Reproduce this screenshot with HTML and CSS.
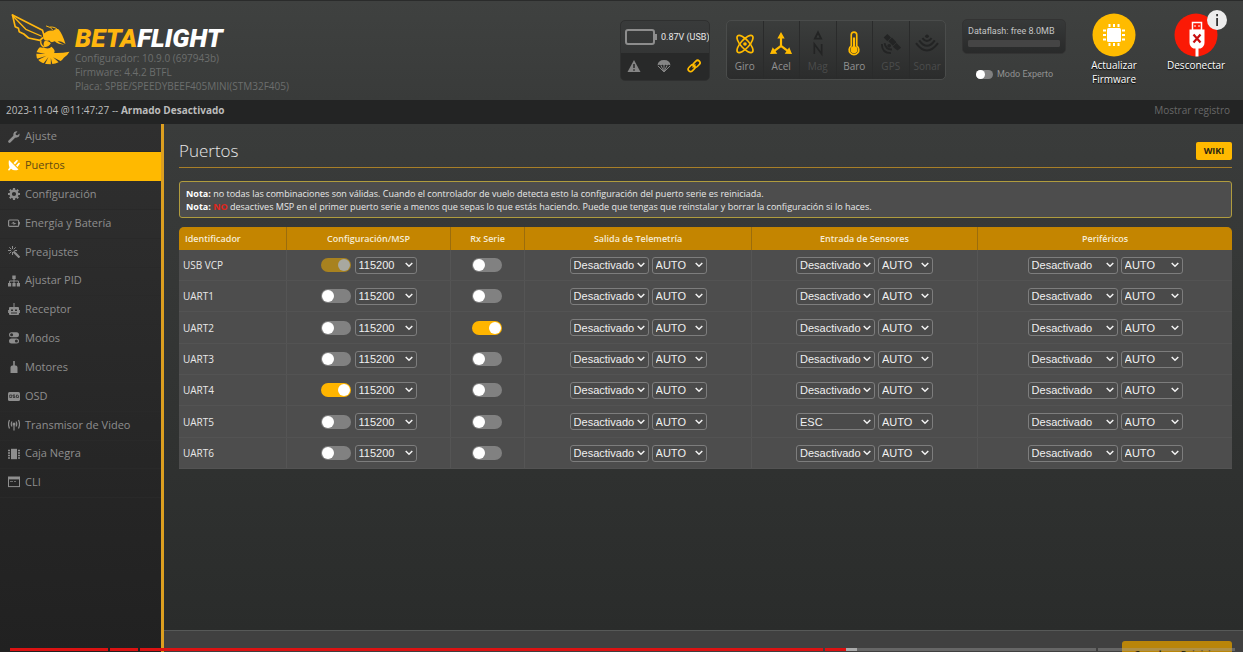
FILE: index.html
```html
<!DOCTYPE html>
<html lang="es">
<head>
<meta charset="utf-8">
<title>Betaflight Configurator - Puertos</title>
<link rel="stylesheet" href="styles.css">
</head>
<body>
<header class="topbar">
  <div class="brand">
    <svg class="bee" viewBox="30 35 180 156" aria-hidden="true">
      <g fill="none" stroke="#ffb70f" stroke-width="5" stroke-linejoin="round" stroke-linecap="round">
        <path d="M36 41 L126 87 L131 104"/>
        <path d="M36 41 L44 76 L54 81 L56 91 L70 98 L84 110 L118 117 L126 110"/>
        <path d="M38 45 L76 84 L122 104" stroke-width="4"/>
        <path d="M121 119 Q119 130 130 137" stroke-width="4"/>
        <path d="M138 74 Q150 76 158 87 M150 77 Q166 76 174 88" stroke-width="3"/>
      </g>
      <g fill="#ffb70f">
        <path d="M128 99 Q142 84 158 88 Q164 80 174 84 Q186 98 195 128 Q184 119 171 119 Q178 127 192 130 Q172 130 163 120 Q150 126 146 117 Q134 122 128 111 Z"/>
        <path d="M133 118 Q146 118 151 126 Q146 136 132 138 Q126 128 133 118 Z"/>
        <path d="M133 140 Q146 144 153 136 Q166 146 161 155 Q184 156 207 151 Q200 164 190 169 Q181 185 151 189 Q120 189 109 170 Q104 149 118 138 Z"/>
      </g>
      <g fill="#3a3c3b">
        <path d="M107 152 L134 158 L107 157Z M108 173 L138 163 L111 177Z M127 189 L144 167 L133 189Z M151 190 L151 170 L156 190Z M176 184 L158 168 L181 180Z"/>
      </g>
    </svg>
    <div class="brand-text">
      <div class="wordmark"><span class="beta">BETA</span>FLIGHT</div>
      <div class="version">Configurador: 10.9.0 (697943b)</div>
      <div class="version">Firmware: 4.4.2 BTFL</div>
      <div class="version">Placa: SPBE/SPEEDYBEEF405MINI(STM32F405)</div>
    </div>
  </div>

  <div class="battery-panel">
    <div class="battery-row">
      <svg width="32" height="16" viewBox="0 0 32 16" aria-hidden="true"><rect x="1" y="1" width="28" height="14" rx="2" fill="none" stroke="#8d8d8d" stroke-width="2"/><rect x="30" y="5" width="2" height="6" fill="#8d8d8d"/></svg>
      <span>0.87V (USB)</span>
    </div>
    <div class="status-icons">
      <svg width="14" height="14" viewBox="0 0 14 14" aria-hidden="true"><path d="M7 1 L13.5 13 H.5 Z" fill="#858585"/><path d="M7 5v4M7 10.2v1.6" stroke="#292929" stroke-width="1.5"/></svg>
      <svg width="14" height="14" viewBox="0 0 14 14" aria-hidden="true"><path d="M.5 6.5 Q1 1 7 1 T13.5 6.5 Q11.500 5 10 6.500 Q8.500 5 7 6.500 Q5.500 5 4 6.500 Q2.500 5 .5 6.500Z" fill="#858585"/><path d="M1 7 L7 13 L13 7 M4 6.500 L7 13 L10 6.500 M7 6v7" stroke="#858585" fill="none"/></svg>
      <svg width="14" height="14" viewBox="0 0 14 14" aria-hidden="true"><g fill="none" stroke="#ffbb00" stroke-width="1.700"><rect x="5.800" y="2.400" width="7.600" height="4.800" rx="2.400" transform="rotate(-45 9.600 4.800)"/><rect x=".8" y="6.800" width="7.600" height="4.800" rx="2.400" transform="rotate(-45 4.600 9.200)"/><path d="M5.500 8.500 L8.500 5.500" stroke-width="1.200"/></g></svg>
    </div>
  </div>

  <ul class="sensors">
    <li class="on"><svg viewBox="0 0 24 24" aria-hidden="true"><g fill="none" stroke="#ffbb00" stroke-width="1.800"><ellipse cx="12" cy="12" rx="12" ry="4.600" transform="rotate(48 12 12)"/><ellipse cx="12" cy="12" rx="12" ry="4.600" transform="rotate(-48 12 12)"/></g><circle cx="12" cy="12" r="2" fill="#ffbb00"/></svg>Giro</li>
    <li class="on"><svg viewBox="0 0 24 24" aria-hidden="true"><path d="M12 3 V14 L4 20 M12 14 L20 20" fill="none" stroke="#ffbb00" stroke-width="2.400"/><path d="M12 -1 L16 6 H8Z M0 23 L3 15.500 L8 22.500Z M24 23 L21 15.500 L16 22.500Z" fill="#ffbb00"/></svg>Acel</li>
    <li><svg viewBox="0 0 24 24" aria-hidden="true"><path d="M12 -3 L17 7 H7Z M12 1.500 L10.300 5.200 H13.700Z" fill="#232424" fill-rule="evenodd"/><path d="M8 23 V12 L16 23 V12" fill="none" stroke="#232424" stroke-width="1.800"/></svg>Mag</li>
    <li class="on"><svg viewBox="0 0 24 24" aria-hidden="true"><path d="M9 14 V2 Q9 -1 12 -1 T15 2 V14 A5.300 5.300 0 1 1 9 14Z" fill="none" stroke="#ffbb00" stroke-width="1.800"/><circle cx="12" cy="18.200" r="3.800" fill="#ffbb00"/><path d="M12 17V5" stroke="#ffbb00" stroke-width="2.400"/></svg>Baro</li>
    <li><svg viewBox="0 0 24 24" aria-hidden="true"><path d="M4 5 L8 1 L12 5 L8 9Z M14 15 L18 11 L23 16 L19 19Z M9 9 L13 5 L18 10 L14 14Z" fill="#232424"/><path d="M2 12 Q2 22 12 22 M5 11 Q6 18 13 18" fill="none" stroke="#232424" stroke-width="2"/><circle cx="10" cy="14" r="2" fill="#232424"/></svg>GPS</li>
    <li><svg viewBox="0 0 24 24" aria-hidden="true"><g fill="none" stroke="#232424" stroke-width="2.200"><path d="M0 11 Q12 27 24 11 M3.500 8 Q12 20 20.500 8 M7 5.500 Q12 12 17 5.500"/></g><circle cx="12" cy="3.500" r="2" fill="#232424"/></svg>Sonar</li>
  </ul>

  <div class="flash-col">
    <div class="dataflash"><label for="flash">Dataflash: free 8.0MB</label><progress id="flash" value="0" max="8"></progress></div>
    <label class="expert"><input class="toggle small" type="checkbox">Modo Experto</label>
  </div>

  <button class="round-action" type="button">
    <svg viewBox="0 0 46 46" aria-hidden="true"><circle cx="23" cy="23" r="21.500" fill="#ffbb00"/><rect x="16" y="16" width="14" height="14" rx="1.500" fill="#fff"/><path d="M18.500 12v3M23 12v3M27.500 12v3M18.500 31v3M23 31v3M27.500 31v3M12 18.500h3M12 23h3M12 27.500h3M31 18.500h3M31 23h3M31 27.500h3" stroke="#fff" stroke-width="2"/></svg>
    Actualizar<br>Firmware
  </button>
  <button class="round-action" type="button">
    <svg viewBox="0 0 46 46" aria-hidden="true"><circle cx="23" cy="23" r="21.500" fill="#fb1a05"/><rect x="19.500" y="10.500" width="9" height="8" fill="#fb1a05" stroke="#fff" stroke-width="1.500"/><path d="M22 13v2M26 13v2" stroke="#fff"/><path d="M16.500 17.500h15v13q0 4-4 6h-2v8h-3v-8h-2q-4-2-4-6z" fill="#fff"/><path d="M20.500 22.500l7 8M27.500 22.500l-7 8" stroke="#c80f10" stroke-width="2.200"/></svg>
    Desconectar
  </button>
  <button class="info" type="button" aria-label="Información"><svg viewBox="0 0 20 20" aria-hidden="true"><circle cx="10" cy="10" r="10" fill="#ededed"/><path d="M9.200 4h1.800v2.200H9.200zM9.200 8h1.800v8H9.200z" fill="#333"/></svg></button>
</header>

<div class="logbar">
  <span>2023-11-04 @11:47:27 -- <b>Armado Desactivado</b></span>
  <a class="showlog" href="#">Mostrar registro</a>
</div>

<div class="body">
  <nav class="sidebar">
    <a href="#"><svg viewBox="0 0 12 12" aria-hidden="true"><path d="M1.500 10.500 L7 5" stroke="currentColor" stroke-width="2.600" stroke-linecap="round"/><path d="M11.500 2.500 L9.500 4.300 L7.800 4 L7.600 2.400 L9.500.5 Q6 -.3 5.300 3 Q5.200 6 8 6.700 Q12 6.500 11.500 2.500Z" fill="currentColor"/></svg>Ajuste</a>
    <a class="active" href="#" aria-current="page"><svg viewBox="0 0 12 12" aria-hidden="true"><path d="M1 1 L10.500 10.500 Q6 12.500 3 9.800 L1 11.800 L0 10.800 L1.500 8.500 Q.2 5 1 1Z M5.500 4 L9 .8 L10 1.800 L7 5.500Z M8 6.500 L11 3.500 L12 4.500 L9.500 8Z" fill="currentColor"/></svg>Puertos</a>
    <a href="#"><svg viewBox="0 0 12 12" aria-hidden="true"><circle cx="6" cy="6" r="3.300" fill="none" stroke="currentColor" stroke-width="2.400"/><path d="M6 0v2M6 10v2M0 6h2M10 6h2M1.800 1.800l1.400 1.400M8.800 8.800l1.400 1.400M10.200 1.800L8.800 3.200M3.200 8.800l-1.400 1.400" stroke="currentColor" stroke-width="2.200"/></svg>Configuración</a>
    <a href="#"><svg viewBox="0 0 12 12" aria-hidden="true"><rect x=".6" y="3" width="10" height="6.400" rx="1" fill="none" stroke="currentColor" stroke-width="1.200"/><path d="M11 5h1v2.400h-1zM3 6.500 L6.200 4.500 V6 H8.500 L5.500 8 V6.500Z" fill="currentColor"/></svg>Energía y Batería</a>
    <a href="#"><svg viewBox="0 0 12 12" aria-hidden="true"><path d="M5.500 5.500 L11.500 11.500" stroke="currentColor" stroke-width="2.200"/><path d="M4.500 0v3M4.500 6v3M0 4.500h3M1.300 1.300l2 2M7.700 1.300l-2 2M1.300 7.700l2-2M6.500 4.500h2.500" stroke="currentColor"/></svg>Preajustes</a>
    <a href="#"><svg viewBox="0 0 12 12" aria-hidden="true"><path d="M4.300.5h3.400v3.400H4.300zM0 8h3.200v3.500H0zM4.400 8h3.200v3.500H4.400zM8.800 8H12v3.500H8.800z" fill="currentColor"/><path d="M6 3v6M1.600 9V6h8.800v3" fill="none" stroke="currentColor"/></svg>Ajustar PID</a>
    <a href="#"><svg viewBox="0 0 12 12" aria-hidden="true"><path d="M2 4h8q1 0 1 1v6q0 1-1 1H2q-1 0-1-1V5q0-1 1-1z" fill="currentColor"/><path d="M6 0v4M.4 7v3M11.600 7v3" stroke="currentColor"/><path d="M3 6.500h2v1.500H3zM7 6.500h2v1.500H7zM3 9.500h6v1H3z" fill="#2e2e2e"/></svg>Receptor</a>
    <a href="#"><svg viewBox="0 0 12 12" aria-hidden="true"><rect x="1" y=".3" width="10" height="5" rx="2.500" fill="currentColor"/><rect x="1" y="6.500" width="10" height="5" rx="2.500" fill="currentColor"/><circle cx="3.600" cy="2.800" r="1.500" fill="#2e2e2e"/><circle cx="8.400" cy="9" r="1.500" fill="#2e2e2e"/></svg>Modos</a>
    <a href="#"><svg viewBox="0 0 12 12" aria-hidden="true"><path d="M5.200 0h1.600v4.500H8q1.500.5 1.500 2V12h-7V6.500q0-1.500 1.500-2h1.200z" fill="currentColor"/></svg>Motores</a>
    <a href="#"><svg viewBox="0 0 12 12" aria-hidden="true"><rect y="2" width="12" height="9" rx="1.500" fill="currentColor"/><path d="M1.700 5h2v2.500h-2zM7 5H5v1.200h2v1.300H5M8.500 5h1.200l.8 1v1.500h-2z" fill="none" stroke="#2e2e2e" stroke-width=".8"/></svg>OSD</a>
    <a href="#"><svg viewBox="0 0 12 12" aria-hidden="true"><circle cx="6" cy="5" r="1.500" fill="currentColor"/><path d="M6 5v6.500M4 2.500q-1.500 2.500 0 5M8 2.500q1.500 2.500 0 5M1.500 1q-2 4 0 8.500M10.500 1q2 4 0 8.500" fill="none" stroke="currentColor" stroke-width="1.200"/></svg>Transmisor de Video</a>
    <a href="#"><svg viewBox="0 0 12 12" aria-hidden="true"><rect x="3" y=".8" width="6" height="10.400" fill="currentColor"/><path d="M0 2.500h2M0 5h2M0 7.500h2M0 10h2M10 2.500h2M10 5h2M10 7.500h2M10 10h2" stroke="currentColor" stroke-width="1.300"/></svg>Caja Negra</a>
    <a href="#"><svg viewBox="0 0 12 12" aria-hidden="true"><rect x=".5" y="1" width="11" height="9.600" fill="none" stroke="currentColor"/><path d="M0 1h12v2.400H0z" fill="currentColor"/><path d="M2 5.500h3M6 5.500h2" stroke="currentColor" stroke-width=".7"/></svg>CLI</a>
  </nav>

  <div class="main">
    <main class="content">
      <div class="title-row"><h1>Puertos</h1><a class="wiki" href="#">WIKI</a></div>
      <div class="note">
        <p><b>Nota:</b> no todas las combinaciones son válidas. Cuando el controlador de vuelo detecta esto la configuración del puerto serie es reiniciada.</p>
        <p><b>Nota:</b> <b class="no">NO</b> desactives MSP en el primer puerto serie a menos que sepas lo que estás haciendo. Puede que tengas que reinstalar y borrar la configuración si lo haces.</p>
      </div>
      <table class="ports">
        <colgroup><col class="c-id"><col class="c-msp"><col class="c-rx"><col class="c-wide"><col class="c-wide"><col></colgroup>
        <thead><tr><th>Identificador</th><th>Configuración/MSP</th><th>Rx Serie</th><th>Salida de Telemetría</th><th>Entrada de Sensores</th><th>Periféricos</th></tr></thead>
        <tbody>
          <tr><td>USB VCP</td>
            <td><div class="cell"><input class="toggle" type="checkbox" checked disabled aria-label="MSP USB VCP"><select class="rate" aria-label="Velocidad MSP"><option>115200</option></select></div></td>
            <td><div class="cell"><input class="toggle" type="checkbox" aria-label="Rx Serie USB VCP"></div></td>
            <td><div class="cell"><select class="func" aria-label="Telemetría"><option>Desactivado</option></select><select class="auto" aria-label="Velocidad telemetría"><option>AUTO</option></select></div></td>
            <td><div class="cell"><select class="func" aria-label="Sensor"><option>Desactivado</option></select><select class="auto" aria-label="Velocidad sensor"><option>AUTO</option></select></div></td>
            <td><div class="cell"><select class="func wide" aria-label="Periférico"><option>Desactivado</option></select><select class="rate" aria-label="Velocidad periférico"><option>AUTO</option></select></div></td></tr>
          <tr><td>UART1</td>
            <td><div class="cell"><input class="toggle" type="checkbox" aria-label="MSP UART1"><select class="rate" aria-label="Velocidad MSP"><option>115200</option></select></div></td>
            <td><div class="cell"><input class="toggle" type="checkbox" aria-label="Rx Serie UART1"></div></td>
            <td><div class="cell"><select class="func" aria-label="Telemetría"><option>Desactivado</option></select><select class="auto" aria-label="Velocidad telemetría"><option>AUTO</option></select></div></td>
            <td><div class="cell"><select class="func" aria-label="Sensor"><option>Desactivado</option></select><select class="auto" aria-label="Velocidad sensor"><option>AUTO</option></select></div></td>
            <td><div class="cell"><select class="func wide" aria-label="Periférico"><option>Desactivado</option></select><select class="rate" aria-label="Velocidad periférico"><option>AUTO</option></select></div></td></tr>
          <tr><td>UART2</td>
            <td><div class="cell"><input class="toggle" type="checkbox" aria-label="MSP UART2"><select class="rate" aria-label="Velocidad MSP"><option>115200</option></select></div></td>
            <td><div class="cell"><input class="toggle" type="checkbox" checked aria-label="Rx Serie UART2"></div></td>
            <td><div class="cell"><select class="func" aria-label="Telemetría"><option>Desactivado</option></select><select class="auto" aria-label="Velocidad telemetría"><option>AUTO</option></select></div></td>
            <td><div class="cell"><select class="func" aria-label="Sensor"><option>Desactivado</option></select><select class="auto" aria-label="Velocidad sensor"><option>AUTO</option></select></div></td>
            <td><div class="cell"><select class="func wide" aria-label="Periférico"><option>Desactivado</option></select><select class="rate" aria-label="Velocidad periférico"><option>AUTO</option></select></div></td></tr>
          <tr><td>UART3</td>
            <td><div class="cell"><input class="toggle" type="checkbox" aria-label="MSP UART3"><select class="rate" aria-label="Velocidad MSP"><option>115200</option></select></div></td>
            <td><div class="cell"><input class="toggle" type="checkbox" aria-label="Rx Serie UART3"></div></td>
            <td><div class="cell"><select class="func" aria-label="Telemetría"><option>Desactivado</option></select><select class="auto" aria-label="Velocidad telemetría"><option>AUTO</option></select></div></td>
            <td><div class="cell"><select class="func" aria-label="Sensor"><option>Desactivado</option></select><select class="auto" aria-label="Velocidad sensor"><option>AUTO</option></select></div></td>
            <td><div class="cell"><select class="func wide" aria-label="Periférico"><option>Desactivado</option></select><select class="rate" aria-label="Velocidad periférico"><option>AUTO</option></select></div></td></tr>
          <tr><td>UART4</td>
            <td><div class="cell"><input class="toggle" type="checkbox" checked aria-label="MSP UART4"><select class="rate" aria-label="Velocidad MSP"><option>115200</option></select></div></td>
            <td><div class="cell"><input class="toggle" type="checkbox" aria-label="Rx Serie UART4"></div></td>
            <td><div class="cell"><select class="func" aria-label="Telemetría"><option>Desactivado</option></select><select class="auto" aria-label="Velocidad telemetría"><option>AUTO</option></select></div></td>
            <td><div class="cell"><select class="func" aria-label="Sensor"><option>Desactivado</option></select><select class="auto" aria-label="Velocidad sensor"><option>AUTO</option></select></div></td>
            <td><div class="cell"><select class="func wide" aria-label="Periférico"><option>Desactivado</option></select><select class="rate" aria-label="Velocidad periférico"><option>AUTO</option></select></div></td></tr>
          <tr><td>UART5</td>
            <td><div class="cell"><input class="toggle" type="checkbox" aria-label="MSP UART5"><select class="rate" aria-label="Velocidad MSP"><option>115200</option></select></div></td>
            <td><div class="cell"><input class="toggle" type="checkbox" aria-label="Rx Serie UART5"></div></td>
            <td><div class="cell"><select class="func" aria-label="Telemetría"><option>Desactivado</option></select><select class="auto" aria-label="Velocidad telemetría"><option>AUTO</option></select></div></td>
            <td><div class="cell"><select class="func" aria-label="Sensor"><option>ESC</option></select><select class="auto" aria-label="Velocidad sensor"><option>AUTO</option></select></div></td>
            <td><div class="cell"><select class="func wide" aria-label="Periférico"><option>Desactivado</option></select><select class="rate" aria-label="Velocidad periférico"><option>AUTO</option></select></div></td></tr>
          <tr><td>UART6</td>
            <td><div class="cell"><input class="toggle" type="checkbox" aria-label="MSP UART6"><select class="rate" aria-label="Velocidad MSP"><option>115200</option></select></div></td>
            <td><div class="cell"><input class="toggle" type="checkbox" aria-label="Rx Serie UART6"></div></td>
            <td><div class="cell"><select class="func" aria-label="Telemetría"><option>Desactivado</option></select><select class="auto" aria-label="Velocidad telemetría"><option>AUTO</option></select></div></td>
            <td><div class="cell"><select class="func" aria-label="Sensor"><option>Desactivado</option></select><select class="auto" aria-label="Velocidad sensor"><option>AUTO</option></select></div></td>
            <td><div class="cell"><select class="func wide" aria-label="Periférico"><option>Desactivado</option></select><select class="rate" aria-label="Velocidad periférico"><option>AUTO</option></select></div></td></tr>
        </tbody>
      </table>
    </main>
    <footer class="toolbar"><button class="save" type="button">Guardar y Reiniciar</button></footer>
  </div>
</div>

<div class="timeline" aria-hidden="true">
  <span class="played" style="flex-grow:98"></span>
  <span class="played" style="flex-grow:28"></span>
  <span class="played" style="flex-grow:682"></span>
  <span class="chapter" style="flex-grow:271"><i class="played" style="width:8%"></i><i class="hover" style="width:4%"></i></span>
  <span class="chapter" style="flex-grow:137"></span>
</div>
</body>
</html>
```
FILE: styles.css
```css
* { box-sizing: border-box; }
body {
  margin: 0;
  height: 100vh;
  overflow: hidden;
  display: flex;
  flex-direction: column;
  font-family: "Open Sans", "Noto Sans", sans-serif;
  font-size: 10px;
  color: #e8e8e8;
  background: #2b2d2c;
}
a { color: inherit; text-decoration: none; }
button { font: inherit; border: 0; padding: 0; cursor: pointer; }
svg { display: block; flex: none; }

.topbar {
  position: relative;
  flex: none;
  height: 100px;
  display: flex;
  align-items: flex-start;
  padding: 12px 16px 0 10px;
  border-top: 1px solid #2a2b2b;
  background: linear-gradient(#3f4140, #393b3a);
}
.brand { display: flex; margin-right: auto; gap: 4px; }
.bee { width: 61px; height: 52px; }
.brand-text { padding-top: 12px; }
.wordmark {
  font: italic 900 26px/26px Roboto, "Liberation Sans", sans-serif;
  color: #fff;
}
.beta { color: #ffb70f; }
.version { line-height: 14px; color: #6c6e6d; }

.battery-panel {
  width: 90px;
  margin: 7px 16px 0 0;
  border: 1px solid #2f3030;
  border-radius: 5px;
  background: linear-gradient(#393b3b, #303131);
  overflow: hidden;
}
.battery-row { height: 32px; display: flex; align-items: center; gap: 4px; padding-left: 4px; font-family: Roboto, sans-serif; font-size: 9px; white-space: nowrap; }
.status-icons { height: 27px; display: flex; align-items: center; justify-content: space-between; padding: 0 8px 2px 6px; background: #282929; }

.sensors {
  display: flex;
  width: 220px;
  list-style: none;
  margin: 7px 16px 0 0;
  padding: 0;
  border: 1px solid #4a4c4b;
  border-radius: 5px;
  background: linear-gradient(#3b3d3c, #2b2c2c);
  overflow: hidden;
}
.sensors li {
  flex: 1;
  height: 58px;
  padding-top: 12px;
  display: flex;
  flex-direction: column;
  align-items: center;
  gap: 4px;
  line-height: 14px;
  color: #4b4c4c;
  border-right: 1px solid #2a2b2b;
}
.sensors li:last-child { border-right: 0; }
.sensors .on { color: #929292; }
.sensors svg { width: 22px; height: 22px; overflow: visible; }

.flash-col { width: 104px; margin: 6px 19px 0 0; }
.dataflash {
  height: 35px;
  padding: 4px 5px;
  border: 1px solid #333;
  border-radius: 5px;
  background: linear-gradient(#373939, #292a2a);
  font-family: Roboto, sans-serif;
  font-size: 9px;
  line-height: 14px;
  white-space: nowrap;
}
.dataflash label { display: block; color: #c4c4c4; }
.dataflash progress { appearance: none; display: block; width: 100%; height: 7px; margin-top: 2px; border: 0; border-radius: 2px; background: #454545; }
.dataflash progress::-webkit-progress-bar { background: #454545; border-radius: 2px; }
.expert { display: flex; align-items: center; gap: 4px; margin: 14px 0 0 14px; color: #929292; font-family: Roboto, sans-serif; font-size: 9px; line-height: 12px; }

.round-action {
  width: 58px;
  margin-right: 24px;
  color: #fff;
  background: none;
  line-height: 14px;
  text-shadow: 0 1px 1px #000;
}
.round-action:nth-last-child(2) { margin: 0 2px 0 0; }
.round-action svg { width: 46px; height: 46px; margin: -1px auto 0; }
.info { position: absolute; top: 9px; right: 16px; width: 20px; height: 20px; background: none; }

.logbar {
  flex: none;
  height: 24px;
  display: flex;
  justify-content: space-between;
  padding: 0 13px 4px 6px;
  line-height: 20px;
  background: #232424;
  color: #bcbcbc;
}
.showlog { color: #686868; }

.body { flex: 1; min-height: 0; display: flex; }
.sidebar {
  flex: none;
  width: 164px;
  border-right: 3px solid #dc9f20;
  background: linear-gradient(#2f2f2f, #212121);
  font-size: 11px;
}
.sidebar a {
  display: flex;
  align-items: center;
  gap: 5px;
  height: 29px;
  padding: 0 0 4px 8px;
  color: #8e8e8e;
  border-bottom: 1px solid #292929;
}
.sidebar a:first-child, .sidebar a:nth-child(6n) { height: 28px; }
.sidebar svg { width: 12px; height: 12px; margin-top: 2px; }
.sidebar .active { background: #ffb900; color: #5f4a12; border-color: #ffb900; }
.sidebar .active svg { color: #fff; }

.main { flex: 1; min-width: 0; display: flex; flex-direction: column; }
.content { flex: 1; min-height: 0; padding: 16px 11px 0 15px; background: linear-gradient(#3a3c3b, #2a2c2b); }
.title-row { display: flex; justify-content: space-between; align-items: center; height: 28px; padding-bottom: 5px; border-bottom: 1px solid #a87f28; }
h1 { margin: 0; font-size: 17px; font-weight: 300; line-height: 22px; }
.wiki { width: 36px; height: 18px; border-radius: 2px; background: #ffb900; color: #2b2410; font-size: 9px; font-weight: 700; line-height: 18px; text-align: center; }
.note { margin: 13px 0 9px; padding: 5px 6px 4px; border: 1px solid #b09c3e; border-radius: 3px; background: #4d4d4d; font-size: 9px; line-height: 13px; }
.note p { margin: 0; }
.note b { color: #fff; }
.note .no { color: #e2261c; }

.ports { width: 100%; table-layout: fixed; border-collapse: separate; border-spacing: 0; border-radius: 5px 5px 0 0; overflow: hidden; background: #4d4d4d; }
.c-id { width: 10.3%; }
.c-msp { width: 15.5%; }
.c-rx { width: 7.1%; }
.c-wide { width: 21.5%; }
.ports th { height: 23px; padding: 0; background: #c48500; border-right: 1px solid #9b6d0d; font-size: 9px; font-weight: 600; color: #f6ecd5; }
.ports th:first-child { text-align: left; padding-left: 6px; }
.ports td { height: 31px; padding: 0; border-right: 1px solid #555; border-bottom: 1px solid #535353; }
.ports tr:nth-child(3n) td { height: 32px; }
.ports td:first-child { padding-left: 4px; }
.ports th:last-child, .ports td:last-child { border-right: 0; }
.cell { display: flex; justify-content: center; align-items: center; gap: 3px; }

select {
  appearance: none;
  height: 17px;
  padding: 0 12px 0 3px;
  border: 1px solid #7d7d7d;
  border-radius: 3px;
  background: #4a4a4a url("data:image/svg+xml,%3Csvg xmlns='http://www.w3.org/2000/svg' width='8' height='6'%3E%3Cpath d='M.7 1 4 4.300 7.300 1' fill='none' stroke='%23f0f0f0' stroke-width='1.500'/%3E%3C/svg%3E") no-repeat right 3px center;
  color: #f0f0f0;
  font: 11px "Liberation Sans", Arial, sans-serif;
}
.rate { width: 62px; }
.func { width: 79px; }
.func.wide { width: 90px; }
.auto { width: 55px; }

.toggle {
  appearance: none;
  width: 30px;
  height: 14px;
  margin: 0 1px 0 0;
  padding: 1px;
  display: flex;
  border-radius: 7px;
  background: #818181;
}
.toggle::before { content: ""; width: 12px; height: 12px; border-radius: 50%; background: #fff; }
.toggle:checked { background: #ffb500; justify-content: flex-end; }
.toggle:disabled { background: #a8821f; }
.toggle:disabled::before { background: #a8a8a0; }
.toggle.small { width: 17px; height: 9px; padding: 0; margin: 0; }
.toggle.small::before { width: 9px; height: 9px; }

.toolbar { flex: none; height: 22px; overflow: hidden; padding: 10px 11px 0; border-top: 1px solid #575958; background: #404040; display: flex; justify-content: flex-end; align-items: flex-start; }
.save { flex: none; width: 110px; height: 24px; border-radius: 3px; background: #b98509; color: #2b2410; font-size: 9px; font-weight: 700; }

.timeline { position: fixed; left: 10px; right: 8px; bottom: 1px; height: 3px; display: flex; gap: 2px; }
.timeline span, .timeline i { flex-basis: 0; display: flex; }
.timeline i { flex: none; }
.played { background: #dc1212; }
.chapter { background: rgba(160, 160, 160, 0.4); }
.hover { background: #aaa; }
```
